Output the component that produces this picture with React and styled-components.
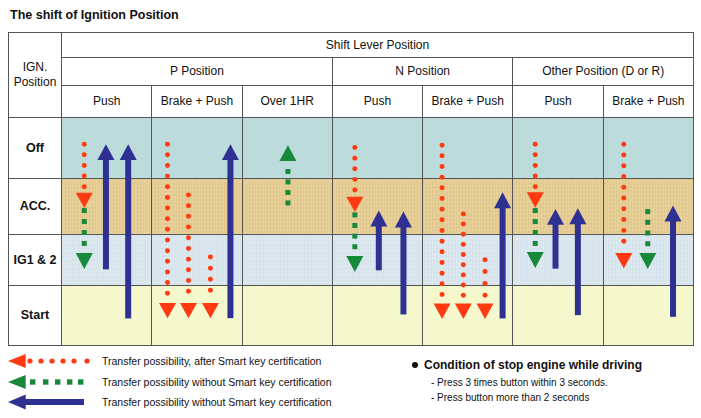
import React from 'react';
import styled, { createGlobalStyle } from 'styled-components';

const GlobalStyle = createGlobalStyle`
  body {
    margin: 0;
    background: #fff;
    font-family: "Liberation Sans", Arial, Helvetica, sans-serif;
    color: #111;
  }
`;

const RED = '#ff3a12';
const GREEN = '#17893a';
const BLUE = '#2e3192';

const Page = styled.div`
  width: 701px;
  height: 418px;
  padding: 8px 0 0 8px;
  box-sizing: border-box;
  overflow: hidden;
`;

const Title = styled.h1`
  margin: 0 0 10px 2px;
  font-size: 12.5px;
  line-height: 14px;
  font-weight: bold;
`;

const Table = styled.div`
  display: grid;
  width: 686px;
  box-sizing: border-box;
  padding: 1px;
  gap: 1px;
  background: #555;
  grid-template-columns: 52px repeat(7, 1fr);
  grid-template-rows: 24px 27px 31px 60px 55px 50px 59px;
`;

const Cell = styled.div`
  background: ${p => p.$bg || '#fff'};
  display: flex;
  align-items: center;
  justify-content: center;
  text-align: center;
  font-size: ${p => (p.$bold ? '12.5px' : '12px')};
  font-weight: ${p => (p.$bold ? 'bold' : 'normal')};
  line-height: 15px;
  grid-column: ${p => p.$col || 'auto'};
  grid-row: ${p => p.$row || 'auto'};
`;

const rowBg = {
  off: '#bcdcdc',
  acc: `repeating-linear-gradient(90deg, rgba(150,110,40,0.07) 0 1px, transparent 1px 3px),
        repeating-linear-gradient(0deg, rgba(255,255,255,0.1) 0 1px, transparent 1px 4px), #e5cd94`,
  ig: `repeating-linear-gradient(90deg, rgba(255,255,255,0.18) 0 1px, transparent 1px 3px),
       repeating-linear-gradient(0deg, rgba(180,200,215,0.12) 0 1px, transparent 1px 4px), #d8e5ed`,
  start: '#f5f8cc',
};

const Overlay = styled.div`
  grid-column: 2 / -1;
  grid-row: 4 / -1;
  pointer-events: none;
  svg {
    display: block;
    width: 100%;
    height: 100%;
  }
`;

const Bottom = styled.div`
  display: flex;
  margin-top: 5px;
`;

const Legend = styled.div`
  display: flex;
  flex-direction: column;
  width: 404px;
`;

const LegendRow = styled.div`
  display: flex;
  align-items: center;
  height: 20.5px;
  font-size: 10.5px;
  svg {
    width: 86px;
    height: 16px;
    margin-right: 8px;
    flex: none;
  }
`;

const Notes = styled.div`
  padding-top: 7px;
`;

const NoteTitle = styled.div`
  display: flex;
  align-items: center;
  font-size: 12px;
  font-weight: bold;
  line-height: 14px;
  margin-bottom: 4px;
  &::before {
    content: '';
    width: 6px;
    height: 6px;
    border-radius: 50%;
    background: #111;
    margin-right: 6px;
  }
`;

const NoteLine = styled.div`
  font-size: 10px;
  line-height: 14.5px;
  margin-left: 19px;
`;

const DOT_STEP = 10.7;

function RedDotted({ x, from, to, head }) {
  const n = Math.round((to - from) / DOT_STEP) + 1;
  const step = n > 1 ? (to - from) / (n - 1) : 0;
  return (
    <g fill={RED}>
      {Array.from({ length: n }, (_, i) => (
        <circle key={i} cx={x} cy={from + i * step} r="2.5" />
      ))}
      <polygon points={`${x - 8.5},${head} ${x + 8.5},${head} ${x},${head + 15.5}`} />
    </g>
  );
}

function GreenDashed({ x, from, to, head, up }) {
  const n = Math.round((to - from) / DOT_STEP) + 1;
  const step = n > 1 ? (to - from) / (n - 1) : 0;
  const tri = up
    ? `${x},${head} ${x - 8.5},${head + 16} ${x + 8.5},${head + 16}`
    : `${x - 8.5},${head} ${x + 8.5},${head} ${x},${head + 16}`;
  return (
    <g fill={GREEN}>
      {Array.from({ length: n }, (_, i) => (
        <rect key={i} x={x - 2.5} y={from + i * step - 2.5} width="5" height="5" />
      ))}
      <polygon points={tri} />
    </g>
  );
}

function BlueArrow({ x, tip, bottom }) {
  return (
    <g fill={BLUE}>
      <rect x={x - 3} y={tip + 14} width="6" height={bottom - tip - 14} />
      <polygon points={`${x},${tip} ${x - 8.5},${tip + 16} ${x + 8.5},${tip + 16}`} />
    </g>
  );
}

const reds = [
  { x: 83.3, from: 143.3, to: 186, head: 192 },
  { x: 166.7, from: 143.3, to: 293, head: 302.7 },
  { x: 187.7, from: 194.3, to: 291, head: 302.7 },
  { x: 209.7, from: 256.7, to: 290, head: 302.7 },
  { x: 354.3, from: 146.7, to: 189.3, head: 196 },
  { x: 441.7, from: 144.3, to: 294.3, head: 303.3 },
  { x: 463, from: 213.3, to: 295, head: 303.3 },
  { x: 484.7, from: 259.3, to: 295, head: 303.3 },
  { x: 535, from: 143.3, to: 186, head: 191.7 },
  { x: 623.7, from: 143.3, to: 240.7, head: 252.7 },
];

const greens = [
  { x: 83.3, from: 210, to: 243, head: 252.7 },
  { x: 354.3, from: 214.3, to: 246.3, head: 255.7 },
  { x: 535, from: 210, to: 243, head: 251.7 },
  { x: 647.7, from: 211, to: 243.3, head: 252.7 },
  { x: 287.3, from: 170.7, to: 202.3, head: 144.3, up: true },
];

const blues = [
  { x: 105, tip: 143.3, bottom: 269 },
  { x: 127.3, tip: 143.3, bottom: 318.3 },
  { x: 229.7, tip: 143.3, bottom: 318 },
  { x: 378.3, tip: 210, bottom: 270 },
  { x: 403, tip: 211, bottom: 314.3 },
  { x: 502.3, tip: 191.7, bottom: 318.3 },
  { x: 555.3, tip: 208.3, bottom: 268.3 },
  { x: 577.7, tip: 207.7, bottom: 315 },
  { x: 673, tip: 205, bottom: 316.7 },
];

const rows = [
  { label: 'Off', bg: rowBg.off },
  { label: 'ACC.', bg: rowBg.acc },
  { label: 'IG1 & 2', bg: rowBg.ig },
  { label: 'Start', bg: rowBg.start },
];

const subHeads = ['Push', 'Brake + Push', 'Over 1HR', 'Push', 'Brake + Push', 'Push', 'Brake + Push'];

function LegendRed() {
  return (
    <svg viewBox="0 0 86 16">
      <polygon points="0,8 17.7,1 17.7,15" fill={RED} />
      {[22, 33, 44, 55, 66, 79].map(cx => (
        <circle key={cx} cx={cx} cy="8" r="2.6" fill={RED} />
      ))}
    </svg>
  );
}

function LegendGreen() {
  return (
    <svg viewBox="0 0 86 16">
      <polygon points="0,8 17.7,1 17.7,15" fill={GREEN} />
      {[22, 35, 47, 59, 70].map(x => (
        <rect key={x} x={x} y="5.3" width="5.4" height="5.4" fill={GREEN} />
      ))}
    </svg>
  );
}

function LegendBlue() {
  return (
    <svg viewBox="0 0 86 16">
      <polygon points="0,8 17.7,0.5 17.7,15.5" fill={BLUE} />
      <rect x="16" y="5" width="60" height="6" fill={BLUE} />
    </svg>
  );
}

export default function App() {
  return (
    <Page>
      <GlobalStyle />
      <Title>The shift of Ignition Position</Title>
      <Table>
        <Cell $col="1" $row="1 / 4">IGN.<br />Position</Cell>
        <Cell $col="2 / -1" $row="1">Shift Lever Position</Cell>
        <Cell $col="2 / 5" $row="2">P Position</Cell>
        <Cell $col="5 / 7" $row="2">N Position</Cell>
        <Cell $col="7 / 9" $row="2">Other Position (D or R)</Cell>
        {subHeads.map((t, i) => (
          <Cell key={i} $row="3" $col={String(i + 2)}>{t}</Cell>
        ))}
        {rows.map((r, ri) => (
          <React.Fragment key={r.label}>
            <Cell $bold $row={String(ri + 4)} $col="1">{r.label}</Cell>
            {subHeads.map((_, i) => (
              <Cell key={i} $bg={r.bg} $row={String(ri + 4)} $col={String(i + 2)} />
            ))}
          </React.Fragment>
        ))}
        <Overlay>
          <svg viewBox="61 117 632 228" preserveAspectRatio="none">
            {blues.map((b, i) => <BlueArrow key={i} {...b} />)}
            {greens.map((g, i) => <GreenDashed key={i} {...g} />)}
            {reds.map((r, i) => <RedDotted key={i} {...r} />)}
          </svg>
        </Overlay>
      </Table>
      <Bottom>
        <Legend>
          <LegendRow><LegendRed />Transfer possibility, after Smart key certification</LegendRow>
          <LegendRow><LegendGreen />Transfer possibility without Smart key certification</LegendRow>
          <LegendRow><LegendBlue />Transfer possibility without Smart key certification</LegendRow>
        </Legend>
        <Notes>
          <NoteTitle>Condition of stop engine while driving</NoteTitle>
          <NoteLine>- Press 3 times button within 3 seconds.</NoteLine>
          <NoteLine>- Press button more than 2 seconds</NoteLine>
        </Notes>
      </Bottom>
    </Page>
  );
}
